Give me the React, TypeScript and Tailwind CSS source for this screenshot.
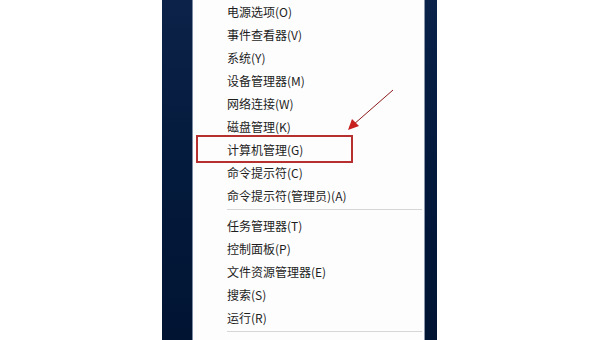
// Win+X 菜单截图复刻 (计算机管理 高亮)
const groups: string[][] = [
  [
    '电源选项(O)',
    '事件查看器(V)',
    '系统(Y)',
    '设备管理器(M)',
    '网络连接(W)',
    '磁盘管理(K)',
    '计算机管理(G)',
    '命令提示符(C)',
    '命令提示符(管理员)(A)',
  ],
  ['任务管理器(T)', '控制面板(P)', '文件资源管理器(E)', '搜索(S)', '运行(R)'],
];

export default function App() {
  return (
    <div
      className="relative flex h-[340px] w-[600px] overflow-hidden bg-white"
      style={{ fontFamily: '"Noto Sans CJK SC", "Noto Sans", sans-serif' }}
    >
      {/* 左侧空白 */}
      <div className="w-[162px] shrink-0 bg-white" />
      {/* 左侧深色边 */}
      <div className="w-[30px] shrink-0 bg-gradient-to-b from-[#0c2248] via-[#041a3c] to-[#011432]" />
      <div className="w-px shrink-0 bg-[#7d8ba3]" />

      {/* 菜单本体 */}
      <div className="w-[231px] shrink-0 bg-[#fdfdfd]">
        {groups.map((items, gi) => (
          <div key={gi}>
            {items.map((label) => (
              <div
                key={label}
                className="flex h-[23px] items-center pl-[34px] text-[12px] leading-none text-[#1e1e1e]"
              >
                {label}
              </div>
            ))}
            <div className="mb-[4px] ml-[34px] mr-[2px] mt-[2px] h-px bg-[#d6d6d6]" />
          </div>
        ))}
      </div>

      {/* 右侧深色边 */}
      <div className="w-px shrink-0 bg-[#8a96aa]" />
      <div className="w-[12px] shrink-0 bg-gradient-to-b from-[#0b2249] via-[#03193c] to-[#011432]" />
      <div className="flex-1 bg-white" />

      {/* 红框标注 */}
      <div className="absolute left-[196px] top-[135px] h-[28px] w-[157px] border-2 border-[#b5302e]" />

      {/* 红色箭头 */}
      <svg className="absolute left-0 top-0" width="600" height="340" viewBox="0 0 600 340">
        <line x1="393" y1="90" x2="353" y2="125" stroke="#8e1a1a" strokeWidth="1" />
        <polygon points="348,130 352,119 359,126" fill="#c8201e" />
      </svg>
    </div>
  );
}
